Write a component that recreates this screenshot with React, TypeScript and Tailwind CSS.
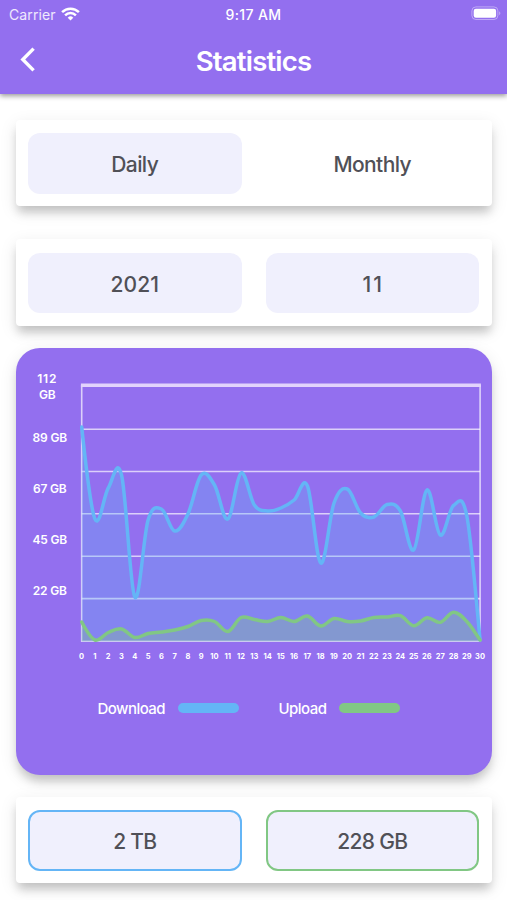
import type { ReactNode } from "react";

const download = [
  427, 519, 488, 475, 597, 520, 509, 531, 514, 475, 485, 519, 473, 505, 511, 508,
  500, 486, 563, 503, 489, 513, 517, 504.5, 511, 550, 490, 535, 505.5, 516, 640,
];
const upload = [
  622, 640, 632.5, 629, 637.5, 633.5, 632, 630, 626.5, 620.5, 621.5, 631.5, 617.5,
  619.5, 621.5, 617.5, 621.5, 616, 626, 618.5, 621.5, 621, 617.5, 617, 615.7, 625.7,
  617.7, 622.3, 612.3, 621.5, 640,
];

const LEFT = 6.7;
const STEP = 13.28;
const TOP = 379;
const SMOOTHNESS = 0.35;

function curve(values: number[]) {
  const p = values.map((v, i) => [LEFT + i * STEP, v - TOP]);
  let d = `M${p[0][0]} ${p[0][1]}`;
  let tx = 0;
  let ty = 0;
  for (let i = 1; i < p.length; i++) {
    const prev = p[i - 1];
    const cur = p[i];
    const next = p[Math.min(i + 1, p.length - 1)];
    const c1 = [prev[0] + tx, prev[1] + ty];
    tx = ((next[0] - prev[0]) / 2) * SMOOTHNESS;
    ty = ((next[1] - prev[1]) / 2) * SMOOTHNESS;
    d += ` C${c1[0]} ${c1[1]} ${cur[0] - tx} ${cur[1] - ty} ${cur[0]} ${cur[1]}`;
  }
  return d;
}

function Chart() {
  const right = LEFT + 30 * STEP;
  const bottom = 262.3;
  const down = curve(download);
  const up = curve(upload);
  const close = ` L${right} ${bottom} L${LEFT} ${bottom} Z`;
  return (
    <svg width="412" height="268" viewBox="0 0 412 268" className="block">
      <g stroke="#fff" strokeOpacity="0.68" strokeWidth="1.6">
        {[50.2, 92.5, 134.8, 177.2, 219.6].map((y) => (
          <line key={y} x1={LEFT} x2={right} y1={y} y2={y} />
        ))}
        <path d={`M${LEFT} 6V${bottom}H${right}V6`} fill="none" />
      </g>
      <line x1={LEFT - 0.8} x2={right + 0.8} y1="6.2" y2="6.2" stroke="#e2d3fc" strokeWidth="3.4" />
      <path d={down + close} fill="#64b5f6" fillOpacity="0.3" />
      <path d={down} fill="none" stroke="#64b5f6" strokeWidth="3.5" strokeLinecap="round" />
      <path d={up + close} fill="#81c784" fillOpacity="0.3" />
      <path d={up} fill="none" stroke="#81c784" strokeWidth="3.5" strokeLinecap="round" />
    </svg>
  );
}

function Card({ children }: { children: ReactNode }) {
  return (
    <section className="mx-[15.5px] flex h-[86.5px] gap-6 rounded-[4px] bg-white px-[12.5px] pt-[13.5px] shadow-[0_8px_10px_-2px_rgba(0,0,0,0.18),0_5px_17px_rgba(0,0,0,0.1)]">
      {children}
    </section>
  );
}

function Tile({ children, look = "bg-[#f0f0fd]" }: { children: ReactNode; look?: string }) {
  return (
    <div
      className={`flex h-[60.5px] flex-1 items-center justify-center rounded-[12px] pt-[3px] text-[21px] font-medium text-[#505057] ${look}`}
    >
      {children}
    </div>
  );
}

export default function App() {
  return (
    <div className="h-[900px] w-full overflow-hidden bg-white font-['Inter','Liberation_Sans',sans-serif]">
      <header className="h-[94px] bg-[#936fef] text-white shadow-[0_2px_5px_rgba(0,0,0,0.4)]">
        <div className="grid h-[28px] grid-cols-3 items-center pr-[5px] pl-[9px] text-[14px]">
          <div className="flex items-center gap-[5px] text-white/85">
            <span className="tracking-[0.1px]">Carrier</span>
            <svg width="19" height="14" viewBox="0 0 19 14" className="mb-[1px]" fill="none" stroke="#fff" strokeWidth="2.5">
              <path d="M1.1 5.2a12 12 0 0 1 16.8 0" />
              <path d="M4.1 8.3a7.7 7.7 0 0 1 10.8 0" />
              <path d="M9.5 13.5 6.7 10.7a4 4 0 0 1 5.6 0Z" fill="#fff" stroke="none" />
            </svg>
          </div>
          <div className="pr-[4px] text-center font-medium tracking-[0.4px]">9:17 AM</div>
          <div className="flex justify-end">
            <svg width="31" height="15" viewBox="0 0 31 15" className="mb-[2px]">
              <rect x="0.9" y="0.9" width="26" height="12.6" rx="4" fill="none" stroke="#fff" strokeOpacity="0.4" />
              <rect x="2.7" y="2.7" width="22.4" height="9" rx="2.2" fill="#fff" />
              <path d="M28.3 5.2q2 2 0 4Z" fill="#fff" fillOpacity="0.5" />
            </svg>
          </div>
        </div>
        <div className="grid h-[66px] grid-cols-[1fr_auto_1fr] items-center">
          <svg width="16" height="26" viewBox="0 0 16 26" className="mb-[3px] ml-[20px]" fill="none" stroke="#fff" strokeWidth="3.4">
            <path d="M13.6 1.6 2.8 12.5 13.6 23.4" />
          </svg>
          <h1 className="pt-[2px] text-[27.5px] font-semibold tracking-[-0.8px]">Statistics</h1>
          <span />
        </div>
      </header>

      <main className="flex flex-col pt-[25.5px]">
        <Card>
          <Tile><span className="tracking-[-0.6px]">Daily</span></Tile>
          <Tile look="bg-white"><span className="tracking-[-0.6px]">Monthly</span></Tile>
        </Card>
        <div className="h-[33px]" />
        <Card>
          <Tile><span className="tracking-[0.1px]">2021</span></Tile>
          <Tile><span className="pl-[2px] tracking-[2px]">11</span></Tile>
        </Card>
        <div className="h-[22.5px]" />
        <section className="mx-[15.5px] h-[427px] rounded-[24px] bg-[#936fef] pt-[13px] text-white shadow-[0_8px_10px_-2px_rgba(0,0,0,0.18),0_5px_17px_rgba(0,0,0,0.1)]">
          <div className="flex h-[310px]">
            <div className="flex w-[59.5px] flex-col pt-[0.5px] pl-[9px] text-[12px] leading-[16px] font-semibold tracking-[-0.2px]">
              {["112 GB", "89 GB", "67 GB", "45 GB", "22 GB"].map((label) => (
                <div key={label} className="flex h-[51px] items-center justify-center">
                  {label === "112 GB" ? (
                    <span className="flex flex-col pr-[5px] text-center">
                      <span className="tracking-[0.8px]">112</span>
                      <span>GB</span>
                    </span>
                  ) : (
                    <span className="whitespace-nowrap">{label}</span>
                  )}
                </div>
              ))}
            </div>
            <div className="w-[412px] pt-[18px]">
              <Chart />
              <div className="grid w-[411.7px] grid-cols-31 pt-[4.5px] text-center text-[7.5px] leading-[10px] font-bold">
                {download.map((_, i) => (
                  <span key={i}>{i}</span>
                ))}
              </div>
            </div>
          </div>
          <div className="flex items-center pt-[25px] pl-[82px] text-[15px] leading-[22px] font-medium tracking-[-0.55px]">
            <span className="w-[80px] pt-[2px]">Download</span>
            <span className="h-[10px] w-[61px] rounded-full bg-[#64b5f6]" />
            <span className="ml-[40px] w-[60px] pt-[2px]">Upload</span>
            <span className="h-[10px] w-[61px] rounded-full bg-[#81c784]" />
          </div>
        </section>
        <div className="h-[21.5px]" />
        <Card>
          <Tile look="bg-[#f0f0fd] border-2 border-[#64b5f6]"><span className="tracking-[-0.8px]">2 TB</span></Tile>
          <Tile look="bg-[#f0f0fd] border-2 border-[#81c784]"><span className="tracking-[-0.7px]">228 GB</span></Tile>
        </Card>
      </main>
    </div>
  );
}
